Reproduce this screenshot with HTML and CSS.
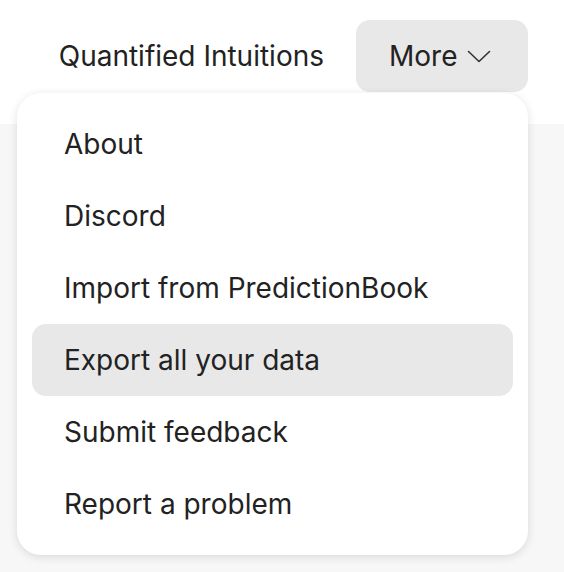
FILE: index.html
```html
<!DOCTYPE html>
<html lang="en">
<head>
    <meta charset="UTF-8">
    <meta name="viewport" content="width=device-width, initial-scale=1.0">
    <title>Quantified Intuitions</title>
    <link rel="stylesheet" href="styles.css">
</head>
<body>
    <header class="topbar">
        <nav class="nav">
            <a class="nav-link" href="#">Quantified Intuitions</a>
            <div class="more">
                <button class="more-btn">
                    <span>More</span>
                    <svg class="chevron" width="24" height="13" viewBox="0 0 24 13" fill="none">
                        <path d="M1.5 1.5 L12 11.5 L22.5 1.5" stroke="#333" stroke-width="1.6" stroke-linecap="round" stroke-linejoin="round"/>
                    </svg>
                </button>
                <div class="menu">
                    <a class="menu-item" href="#">About</a>
                    <a class="menu-item" href="#">Discord</a>
                    <a class="menu-item" href="#">Import from PredictionBook</a>
                    <a class="menu-item active" href="#">Export all your data</a>
                    <a class="menu-item" href="#">Submit feedback</a>
                    <a class="menu-item" href="#">Report a problem</a>
                </div>
            </div>
        </nav>
    </header>
    <main class="content"></main>
</body>
</html>
```

FILE: styles.css
```css
body {
    margin: 0;
    font-family: Inter, "Noto Sans", sans-serif;
    color: #222;
    background: #f7f7f7;
    min-height: 100vh;
}

.topbar {
    height: 124px;
    background: #fff;
    box-sizing: border-box;
    padding: 20px 36px 0 0;
}

.nav {
    display: flex;
    justify-content: flex-end;
    align-items: center;
}

.nav-link {
    display: block;
    padding: 0 32px;
    line-height: 72px;
    font-size: 28px;
    color: #222;
    text-decoration: none;
}

.more {
    position: relative;
}

.more-btn {
    display: flex;
    align-items: center;
    justify-content: space-between;
    width: 172px;
    height: 72px;
    padding: 0 37px 0 33px;
    border: none;
    border-radius: 14px;
    background: #e8e8e8;
    font-family: inherit;
    font-size: 28px;
    color: #222;
    cursor: pointer;
}

.chevron {
    margin-top: 1px;
}

.menu {
    position: absolute;
    top: 73px;
    right: 0;
    width: 511px;
    box-sizing: border-box;
    padding: 15px;
    background: #fff;
    border-radius: 24px;
    box-shadow: 0 2px 10px rgba(0,0,0,0.12);
    display: flex;
    flex-direction: column;
}

.menu-item {
    display: block;
    height: 72px;
    line-height: 72px;
    padding: 0 32px;
    border-radius: 14px;
    font-size: 28px;
    color: #222;
    text-decoration: none;
}

.menu-item.active {
    background: #e8e8e8;
}
```
